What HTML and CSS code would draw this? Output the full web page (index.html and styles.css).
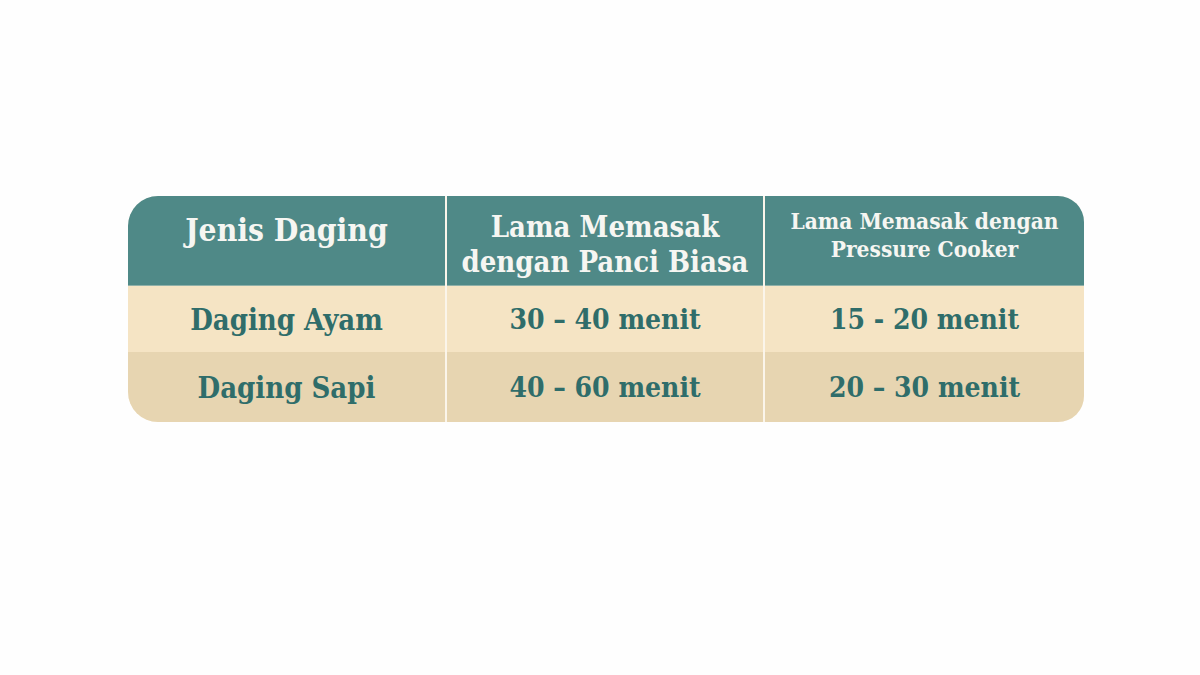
FILE: index.html
```html
<!DOCTYPE html>
<html lang="id">
<head>
<meta charset="utf-8">
<link rel="stylesheet" href="styles.css">
</head>
<body>
<div class="page">
  <div class="table">
    <div class="cell head h1">Jenis Daging</div>
    <div class="cell head h2">Lama Memasak<br>dengan Panci Biasa</div>
    <div class="cell head h3">Lama Memasak dengan<br>Pressure Cooker</div>
    <div class="cell r1 c1">Daging Ayam</div>
    <div class="cell r1">30 – 40 menit</div>
    <div class="cell r1">15 - 20 menit</div>
    <div class="cell r2 c1">Daging Sapi</div>
    <div class="cell r2">40 – 60 menit</div>
    <div class="cell r2">20 – 30 menit</div>
  </div>
</div>
</body>
</html>
```
FILE: styles.css
```css
html, body {
  margin: 0;
  padding: 0;
  background: #fefefe;
}
.page {
  width: 1200px;
  height: 675px;
  padding-top: 196px;
  padding-left: 128px;
  box-sizing: border-box;
}
.table {
  width: 956px;
  display: grid;
  grid-template-columns: 317px 316px 319px;
  grid-template-rows: 90px 66px 70px;
  column-gap: 2px;
  background: #fbf5ea;
  border-radius: 30px 26px 26px 30px;
  overflow: hidden;
  font-family: "DejaVu Serif Condensed", "DejaVu Serif", serif;
  font-stretch: condensed;
  font-weight: bold;
}
.cell {
  display: flex;
  align-items: center;
  justify-content: center;
  text-align: center;
}
.head {
  align-items: flex-start;
  background: #4f8987;
  color: #f6f6f2;
  box-sizing: border-box;
  border-bottom: 1px solid #8fb0a8;
}
.h1 {
  font-size: 31.5px;
  line-height: 34px;
  padding-top: 17px;
}
.h2 {
  font-size: 29px;
  line-height: 35px;
  padding-top: 14px;
}
.h3 {
  font-size: 22.5px;
  line-height: 28px;
  padding-top: 11px;
}
.r1 {
  background: #f5e4c4;
  color: #2f6d6a;
  font-size: 28px;
  padding-top: 1px;
}
.r2 {
  background: #e7d5b1;
  color: #2f6d6a;
  font-size: 28px;
  padding-top: 1px;
}
.c1 {
  font-size: 29px;
}
```
